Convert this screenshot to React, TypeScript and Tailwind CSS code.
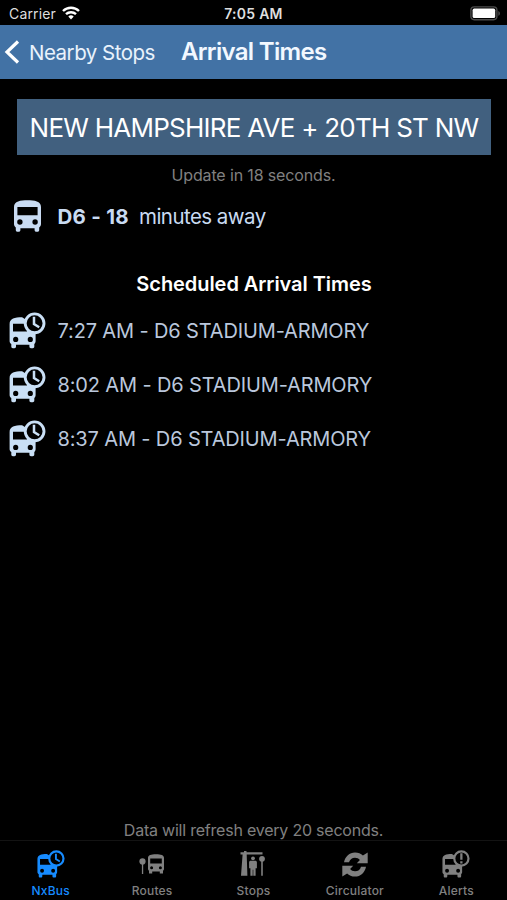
import { FC, ReactNode } from "react";

type IconProps = { className?: string };

const arrivals = [
  { time: "7:27 AM", route: "D6 STADIUM-ARMORY" },
  { time: "8:02 AM", route: "D6 STADIUM-ARMORY" },
  { time: "8:37 AM", route: "D6 STADIUM-ARMORY" },
];

const WifiIcon: FC<IconProps> = ({ className }) => (
  <svg viewBox="0 0 18 14" className={className} fill="currentColor">
    <path d="M9 13.5 6.3 10.600a4 4 0 0 1 5.400 0z" />
    <path d="M4 8.200a7.200 7.200 0 0 1 10 0M1 5a11.500 11.500 0 0 1 16 0" fill="none" stroke="currentColor" strokeWidth="2.400" />
  </svg>
);

const BatteryIcon: FC<IconProps> = ({ className }) => (
  <svg viewBox="0 0 31 15" className={className}>
    <rect x="0.9" y="0.9" width="26" height="12.8" rx="3.4" fill="none" stroke="#4c4c4c" strokeWidth="1.4" />
    <rect x="2.6" y="2.6" width="22.6" height="9.4" rx="1.6" fill="#fff" />
    <path d="M28.3 5v4.8c2.2-.8 2.2-4 0-4.8z" fill="#4c4c4c" />
  </svg>
);

const BusIcon: FC<IconProps> = ({ className }) => (
  <svg viewBox="0 0 27 32" className={className} fill="currentColor">
    <path
      fillRule="evenodd"
      d="M0 7C0 1.2 6.500.2 13.500.2S27 1.200 27 7v17c0 1.600-.7 2.600-1.800 3.400V30c0 1.100-.7 1.800-1.800 1.800h-1c-1.100 0-1.800-.7-1.800-1.800v-1.700H6.400V30c0 1.100-.7 1.800-1.800 1.800h-1c-1.100 0-1.800-.7-1.800-1.800v-2.600C.7 26.600 0 25.600 0 24zM3.400 7v8.200h20.200V7zM5.900 19.300a2.700 2.700 0 1 0 0 5.400 2.700 2.700 0 0 0 0-5.400zM21.100 19.300a2.700 2.700 0 1 0 0 5.400 2.700 2.700 0 0 0 0-5.400z"
    />
  </svg>
);

/** Bus with a round badge over its upper right corner. */
const BadgeBus: FC<IconProps & { children: ReactNode }> = ({ className, children }) => (
  <svg viewBox="0 0 37 37" className={className} fill="currentColor">
    <path
      fillRule="evenodd"
      d="M.6 12c0-5.400 5-6.700 12.500-6.700L26.600 14v15c0 1.500-.6 2.300-1.300 3v2.600c0 1-.6 1.700-1.600 1.700h-1.700c-1 0-1.600-.7-1.600-1.700V32.700H7v1.900c0 1-.6 1.700-1.600 1.700H3.900c-1 0-1.600-.7-1.600-1.700V32C1.200 31.300.6 30.500.6 29zM4 11.800v7.800h14v-7.800zM6.700 24.800a2.600 2.600 0 1 0 0 5.200 2.600 2.600 0 0 0 0-5.200zM21.300 24.800a2.600 2.600 0 1 0 0 5.200 2.600 2.600 0 0 0 0-5.200z"
    />
    <circle cx="25.600" cy="11.300" r="9.400" fill="#000" stroke="currentColor" strokeWidth="2.900" />
    {children}
  </svg>
);

const BusClockIcon: FC<IconProps> = ({ className }) => (
  <BadgeBus className={className}>
    <path d="M25 4.800v7.200l5.200 3.200" fill="none" stroke="currentColor" strokeWidth="2.500" />
  </BadgeBus>
);

const BusAlertIcon: FC<IconProps> = ({ className }) => (
  <BadgeBus className={className}>
    <path d="M25.600 4.300v8.700M25.600 14.800v3.200" fill="none" stroke="currentColor" strokeWidth="3" />
  </BadgeBus>
);

const RoutesIcon: FC<IconProps> = ({ className }) => (
  <svg viewBox="0 0 26 20" className={className} fill="currentColor">
    <circle cx="3.500" cy="7.400" r="3.100" />
    <path d="M2.900 9h1.300v11H2.900z" />
    <path
      fillRule="evenodd"
      d="M9 4c0-2.800 3-3.800 8-3.800s8 1 8 3.800v11c0 .8-.4 1.300-1 1.700v2.900h-3.200V17.600h-7.600v2H10v-2.900c-.6-.4-1-.9-1-1.700zM11.200 4.600v5h11.600v-5zM12.600 12.200a1.500 1.500 0 1 0 0 3 1.500 1.500 0 0 0 0-3zM21.400 12.200a1.500 1.500 0 1 0 0 3 1.500 1.500 0 0 0 0-3z"
    />
  </svg>
);

const StopsIcon: FC<IconProps> = ({ className }) => (
  <svg viewBox="0 0 26 26" className={className} fill="currentColor">
    <path d="M.5 1.200h3.500V0h2.500v1.200h16v2.200H6.700l.7 21.300H1L2.600 3.400H.5z" />
    <circle cx="13" cy="7.300" r="1.900" />
    <path d="M10.800 9.700h4.400c1.100 0 1.700.7 1.700 1.600v5.900h-1.300v7.500h-2.300v-6h-.6v6h-2.300v-7.500H9.100v-5.900c0-.9.600-1.600 1.700-1.600z" />
    <circle cx="22" cy="7.800" r="2.900" />
    <path d="M21.200 9.500h1.600v15.200h-1.600z" />
  </svg>
);

const CirculatorIcon: FC<IconProps> = ({ className }) => (
  <svg viewBox="0 0 26 25" className={className} fill="currentColor">
    <path d="M2 10.300C3.200 4.300 7.500.4 13 .4c3.200 0 5.900 1.200 7.900 3.100L25.700.6v10.700H14.800l3.100-3.400C16.700 6.500 15 5.700 13 5.700c-3 0-5.200 1.700-6 4.600z" />
    <path d="M24 14.700c-1.200 6-5.500 9.900-11 9.900-3.200 0-5.900-1.200-7.900-3.100L.3 24.400V13.700h10.900l-3.100 3.400C9.300 18.500 11 19.300 13 19.300c3 0 5.200-1.700 6-4.600z" />
  </svg>
);

const tabs = [
  { label: "NxBus", icon: <BusClockIcon className="h-7 w-7" />, active: true },
  { label: "Routes", icon: <RoutesIcon className="h-5 w-[26px]" /> },
  { label: "Stops", icon: <StopsIcon className="h-[26px] w-[26px]" /> },
  { label: "Circulator", icon: <CirculatorIcon className="h-[25px] w-[26px]" /> },
  { label: "Alerts", icon: <BusAlertIcon className="h-7 w-7" /> },
];

export default function App() {
  return (
    <div className="flex h-[900px] w-[507px] flex-col overflow-hidden bg-black font-['Inter',sans-serif] whitespace-nowrap">
      <div className="grid h-[25px] shrink-0 grid-cols-3 items-center pt-[3px] text-[14px] leading-[18px] text-[#dedede]">
        <div className="flex items-center gap-[6px] pl-[9px]">
          <span className="tracking-[0.15px]">Carrier</span>
          <WifiIcon className="h-[14px] w-[18px] -translate-y-px text-white" />
        </div>
        <span className="text-center font-semibold tracking-[0.25px]">7:05 AM</span>
        <BatteryIcon className="mr-[6px] h-[15px] w-[31px] -translate-y-px justify-self-end" />
      </div>

      <header className="flex h-[54px] shrink-0 items-center bg-[#4272a5] pl-[4px] text-white">
        <svg viewBox="0 0 16 24" className="h-6 w-4" fill="none" stroke="currentColor" strokeWidth="3.200">
          <path d="M14 1.500 3 12l11 10.500" />
        </svg>
        <span className="ml-[9px] w-[152px] pt-px text-[20.5px] leading-6 tracking-[-0.5px] text-[#e9f2fc]">Nearby Stops</span>
        <h1 className="text-[24px] leading-7 font-semibold tracking-[-0.68px] text-[#f2f8ff]">Arrival Times</h1>
      </header>

      <main className="flex flex-1 flex-col">
        <div className="mr-[16px] ml-[17px] mt-[20px] flex h-[56px] items-center justify-center bg-[#41607f] text-[26px] tracking-[-0.75px] text-white">
          NEW HAMPSHIRE AVE + 20TH ST NW
        </div>
        <p className="mt-[10px] text-center text-[16px] leading-5 tracking-[-0.14px] text-[#808080]">Update in 18 seconds.</p>
        <div className="mt-[15px] flex h-8 items-center pl-[14px] text-[20.5px] text-[#c9dbf2]">
          <BusIcon className="h-8 w-[27px]" />
          <span className="ml-[16.5px] w-[81.5px] pt-[3px] font-bold tracking-[0.25px]">D6 - 18</span>
          <span className="pt-[3px] tracking-[-0.55px]">minutes away</span>
        </div>
        <h2 className="mt-[40px] pl-px text-center text-[20px] leading-6 font-semibold tracking-[-0.06px] text-white">Scheduled Arrival Times</h2>
        <ul className="mt-[8px] text-[20px] tracking-[-0.14px] text-[#bac7dc]">
          {arrivals.map((a) => (
            <li key={a.time} className="flex h-[54px] items-center pl-[9px]">
              <BusClockIcon className="mb-[2px] h-[37px] w-[37px] text-[#c9dff5]" />
              <span className="ml-[11.5px]">{a.time} - {a.route}</span>
            </li>
          ))}
        </ul>
        <p className="mt-auto text-center text-[16px] leading-5 tracking-[-0.22px] text-[#808080]">Data will refresh every 20 seconds.</p>
      </main>

      <nav className="grid h-[60px] shrink-0 grid-cols-5 border-t border-[#131313] text-[12px] leading-4 font-medium tracking-[0.2px]">
        {tabs.map((t) => (
          <div key={t.label} className={`flex flex-col items-center ${t.active ? "text-[#168bff]" : "text-[#808080]"}`}>
            <div className="flex h-[42px] items-center pt-[4px]">{t.icon}</div>
            <span>{t.label}</span>
          </div>
        ))}
      </nav>
    </div>
  );
}
